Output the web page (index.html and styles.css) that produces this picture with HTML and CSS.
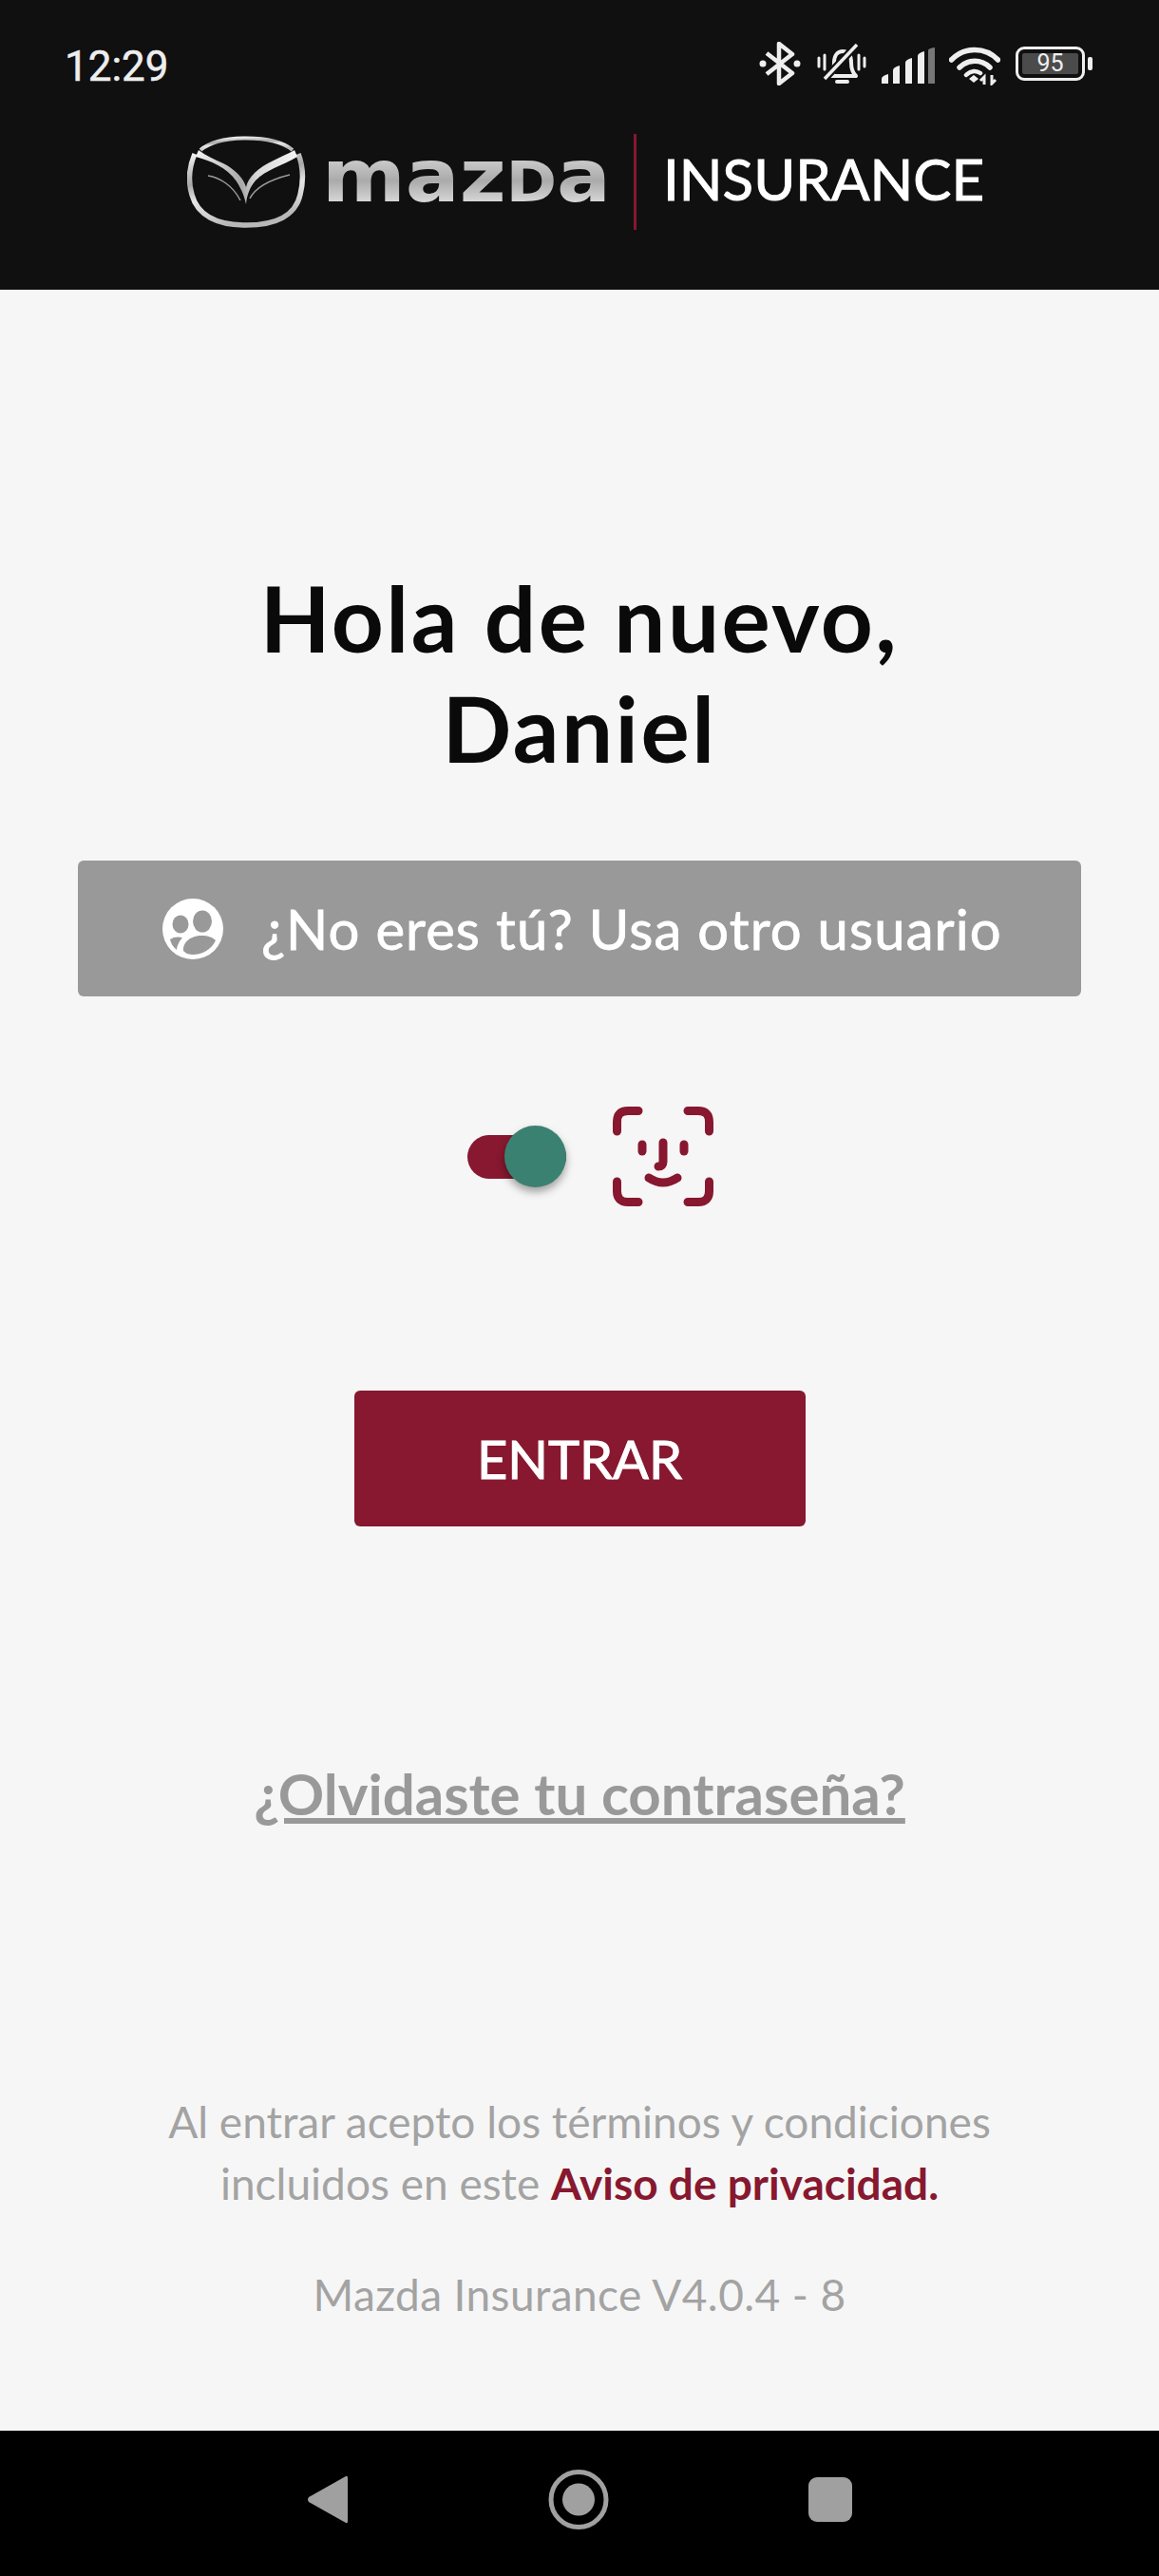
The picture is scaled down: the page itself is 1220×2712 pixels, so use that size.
FILE: index.html
```html
<!DOCTYPE html>
<html lang="es">
<head>
<meta charset="utf-8">
<title>Mazda Insurance</title>
<link rel="stylesheet" href="styles.css">
</head>
<body>
<div class="screen">
  <header class="top">
    <div class="status">
      <span class="time">12:29</span>
      <div class="status-icons">
        <svg class="ic-bt" width="44" height="46" viewBox="0 0 44 46"><path d="M8 12 L35 33 L21 44 V2 L35 13 L8 34" fill="none" stroke="#eee" stroke-width="4.5" stroke-linejoin="round"/><circle cx="4" cy="23" r="3.5" fill="#eee"/><circle cx="40" cy="23" r="3.5" fill="#eee"/></svg>
        <svg class="ic-bell" width="52" height="44" viewBox="0 0 52 44"><path d="M15 34 C18 30 18 26 18 20 C18 12 22 8 27 8 C33 8 36 12 36 20 C36 26 37 30 41 34 Z" fill="none" stroke="#eee" stroke-width="4" stroke-linejoin="round"/><path d="M21 40 H32" stroke="#eee" stroke-width="4" stroke-linecap="round"/><path d="M42 1 L8 37" stroke="#111" stroke-width="8"/><path d="M42 1 L8 37" stroke="#eee" stroke-width="3.5"/><path d="M2 15 V24 M8 12 V27 M44 12 V27 M50 15 V24" stroke="#eee" stroke-width="3" stroke-linecap="round"/></svg>
        <svg class="ic-signal" width="56" height="38" viewBox="0 0 56 38"><path d="M0 38 V33 Q0 30 7 28 V38 Z" fill="#eee"/><path d="M12 38 V24 Q12 21 19 19 V38 Z" fill="#eee"/><path d="M25 38 V16 Q25 13 32 11 V38 Z" fill="#eee"/><path d="M38 38 V9 Q38 6 45 4 V38 Z" fill="#eee"/><path d="M49 38 V3 Q49 1 56 0 V38 Z" fill="#777"/></svg>
        <svg class="ic-wifi" width="54" height="42" viewBox="0 0 54 42"><path d="M2.500 15 C16 1 38 1 51.500 15" fill="none" stroke="#eee" stroke-width="5.500" stroke-linecap="round"/><path d="M11 23 C20 14 34 14 43 23" fill="none" stroke="#eee" stroke-width="5.500" stroke-linecap="round"/><path d="M18 31 C23 26 29 26 33 29" fill="none" stroke="#eee" stroke-width="4.500" stroke-linecap="round"/><path d="M21 35 L26 31 L31 35 L26 39 Z" fill="#eee"/><path d="M37 41 V33 L33 37 M45 31 V40 L49 36" fill="none" stroke="#eee" stroke-width="3"/></svg>
        <div class="battery">
          <div class="battery-body"><div class="battery-fill">95</div></div>
          <div class="battery-tip"></div>
        </div>
      </div>
    </div>
    <div class="brand">
      <svg class="emblem" width="125" height="97" viewBox="0 0 125 97">
        <defs>
          <linearGradient id="ring" x1="0" y1="0" x2="0.3" y2="1"><stop offset="0" stop-color="#f2f2f2"/><stop offset=".4" stop-color="#a8a8a8"/><stop offset=".62" stop-color="#e6e6e6"/><stop offset=".85" stop-color="#d0d0d0"/><stop offset="1" stop-color="#b8b8b8"/></linearGradient>
          <linearGradient id="wing" x1="0" y1="0" x2="1" y2="0"><stop offset="0" stop-color="#f6f6f6"/><stop offset=".45" stop-color="#a8a8a8"/><stop offset=".6" stop-color="#d8d8d8"/><stop offset="1" stop-color="#f4f4f4"/></linearGradient>
        </defs>
        <path d="M14 15 C26 5 45 2.500 62 2.500 C80 2.500 99 5 111 15" fill="none" stroke="url(#ring)" stroke-width="4"/>
        <path d="M8 19 C1.500 34 1.500 50 5 62 C11 84 32 94 62 94 C93 94 114 84 119 62 C122.500 48 122 32 117 19" fill="none" stroke="url(#ring)" stroke-width="5.500"/>
        <path d="M12 15 L9 22 C24 26 42 33 52 48 C57 56 60 63 62 72 C63 62 66 54 72 47 C82 36 101 31 116 22 L113 15 C99 23 82 28 71 39 C66 44 63 49 62 54 C59 44 50 35 38 29 C29 25 20 21 12 15 Z" fill="url(#wing)"/>
        <path d="M22 42 C34 44 48 52 56 68 M66 66 C72 54 88 46 108 41" fill="none" stroke="#9a9a9a" stroke-width="1.500"/>
      </svg>
      <svg class="wordmark" width="304" height="44" viewBox="0 0 304 44">
        <defs>
          <linearGradient id="word" x1="0" y1="0" x2="0" y2="1"><stop offset="0" stop-color="#8f8f8f"/><stop offset=".15" stop-color="#e0e0e0"/><stop offset=".55" stop-color="#aaa"/><stop offset=".8" stop-color="#d6d6d6"/><stop offset="1" stop-color="#666"/></linearGradient>
        </defs>
        <text class="wordmark-text" x="0" y="42" textLength="304" lengthAdjust="spacingAndGlyphs" fill="url(#word)">maz<tspan class="wordmark-d">d</tspan>a</text>
      </svg>
      <div class="brand-sep"></div>
      <span class="brand-name">INSURANCE</span>
    </div>
  </header>

  <main class="content">
    <h1 class="greeting">Hola de nuevo,<br>Daniel</h1>
    <button class="btn-other" type="button">
      <svg class="user-ic" width="64" height="64" viewBox="0 0 64 64">
        <circle cx="32" cy="32" r="32" fill="#fff"/>
        <ellipse cx="19" cy="27" rx="8.500" ry="9.500" fill="#999"/>
        <ellipse cx="42" cy="24" rx="10" ry="11.500" fill="#999"/>
        <path d="M8 43 C12 40 17 40 21 41 C17 46 15 50 15 54 C11 51 9 47 8 43 Z" fill="#999"/>
        <path d="M22 55 C21 46 30 39 41 39 C48 39 53 41 56 44 C52 53 42 59 32 59 C28 59 25 58 22 55 Z" fill="#999"/>
      </svg>
      <span>¿No eres tú? Usa otro usuario</span>
    </button>

    <div class="bio">
      <div class="toggle"><div class="toggle-thumb"></div></div>
      <svg class="face" width="106" height="105" viewBox="0 0 106 105" fill="none" stroke="#87182f" stroke-width="9" stroke-linecap="round">
        <path d="M4.500 26 V16 Q4.500 4.500 16 4.500 H27"/>
        <path d="M79 4.500 H90 Q101.500 4.500 101.500 16 V26"/>
        <path d="M4.500 79 V89 Q4.500 100.500 16 100.500 H27"/>
        <path d="M79 100.500 H90 Q101.500 100.500 101.500 89 V79"/>
        <path d="M31 40 V47"/>
        <path d="M75 40 V47"/>
        <path d="M53 38 V58 Q53 63 48 63"/>
        <path d="M38 75 Q53 85 68 75"/>
      </svg>
    </div>

    <button class="btn-enter" type="button">ENTRAR</button>

    <a class="forgot" href="#">¿Olvidaste tu contraseña?</a>

    <p class="legal">Al entrar acepto los términos y condiciones<br>incluidos en este <strong class="legal-link">Aviso de privacidad.</strong></p>
    <p class="version">Mazda Insurance V4.0.4 - 8</p>
  </main>

  <nav class="nav">
    <svg width="44" height="53" viewBox="0 0 44 53"><path d="M41 2 Q43 1 43 4 V49 Q43 52 41 51 L2 29 Q0 26.500 2 24 Z" fill="#a0a0a0"/></svg>
    <svg width="64" height="63" viewBox="0 0 64 63"><circle cx="32" cy="31.500" r="29" fill="none" stroke="#a0a0a0" stroke-width="5"/><circle cx="32" cy="31.500" r="17" fill="#a0a0a0"/></svg>
    <div class="nav-square"></div>
  </nav>
</div>
</body>
</html>
```
FILE: styles.css
```css
* { box-sizing: border-box; }
html, body { margin: 0; padding: 0; }
body { font-family: "Lato", "Liberation Sans", sans-serif; background: #f6f6f6; }
.screen { width: 1220px; height: 2712px; display: flex; flex-direction: column; overflow: hidden; }

.top { height: 305px; background: #101011; flex: none; }
.status { height: 141px; display: flex; align-items: flex-start; padding: 46px 68px 0 68px; }
.time { font-family: "Roboto", sans-serif; font-size: 44px; line-height: 48px; color: #eee; font-weight: 400; -webkit-text-stroke: .5px #eee; letter-spacing: 0; }
.status-icons { margin: -2px 0 0 auto; display: flex; align-items: flex-start; }
.ic-bell { margin: 2px 0 0 17px; }
.ic-signal { margin: 6px 0 0 16px; }
.ic-wifi { margin: 4px 0 0 15px; }
.battery { margin: 5px 2px 0 16px; display: flex; align-items: center; }
.battery-body { width: 73px; height: 36px; border: 3px solid #eee; border-radius: 9px; padding: 4px; }
.battery-fill { height: 100%; background: #4b4b4b; color: #eee; font-family: "Roboto", sans-serif; font-size: 25px; line-height: 22px; text-align: center; border-radius: 2px; }
.battery-tip { width: 5px; height: 14px; margin-left: 3px; background: #eee; border-radius: 2px; }

.brand { display: flex; align-items: flex-start; padding-left: 197px; }
.emblem { margin-top: 2px; flex: none; }
.wordmark { margin: 29px 0 0 17px; flex: none; overflow: visible; }
.wordmark-text { font-family: "DejaVu Sans", sans-serif; font-weight: 700; font-size: 76px; }
.wordmark-d { text-transform: uppercase; font-size: 58px; }
.brand-sep { width: 3px; height: 101px; margin-left: 24px; background: #87182f; }
.brand-name { margin-left: 28px; font-size: 60px; line-height: 70px; margin-top: 12px; color: #fff; font-weight: 400; -webkit-text-stroke: 1px #fff; letter-spacing: 0; }

.content { flex: 1; display: flex; flex-direction: column; align-items: center; }
.greeting { margin: 287px 0 0; font-size: 96px; line-height: 116px; font-weight: 700; color: #0a0a0a; text-align: center; letter-spacing: 2.5px; }
.btn-other { margin-top: 82px; width: 1056px; height: 143px; background: #999; border: 0; border-radius: 6px; color: #fff; font: inherit; font-size: 58px; font-weight: 400; -webkit-text-stroke: .8px #fff; letter-spacing: 1.1px; display: flex; align-items: center; padding: 0 0 0 89px; gap: 40px; }
.user-ic { flex: none; }
.bio { margin-top: 116px; margin-left: 23px; display: flex; align-items: center; gap: 49px; }
.toggle { width: 104px; height: 46px; background: #87182f; border-radius: 23px; display: flex; justify-content: flex-end; align-items: center; }
.toggle-thumb { width: 65px; height: 65px; border-radius: 50%; background: #3b8172; box-shadow: 0 5px 8px rgba(0,0,0,.35); }
.btn-enter { margin-top: 194px; width: 475px; height: 143px; background: #87182f; border: 0; border-radius: 6px; color: #fff; font: inherit; font-size: 56px; font-weight: 400; -webkit-text-stroke: 1px #fff; }
.forgot { margin-top: 245px; font-size: 60px; line-height: 72px; font-weight: 700; color: #999; text-decoration: underline; }
.legal { margin: 277px 0 0; font-size: 46px; line-height: 65px; font-weight: 400; color: #a3a3a3; text-align: center; letter-spacing: 0; }
.legal-link { color: #87182f; font-weight: 700; letter-spacing: 0; }
.version { margin: 57px 0 0; font-size: 46px; line-height: 56px; font-weight: 400; color: #a3a3a3; letter-spacing: .4px; }

.nav { height: 153px; flex: none; background: #000; display: flex; align-items: center; justify-content: center; gap: 210px; padding-bottom: 9px; }
.nav-square { width: 46px; height: 47px; background: #a0a0a0; border-radius: 9px; }
```
